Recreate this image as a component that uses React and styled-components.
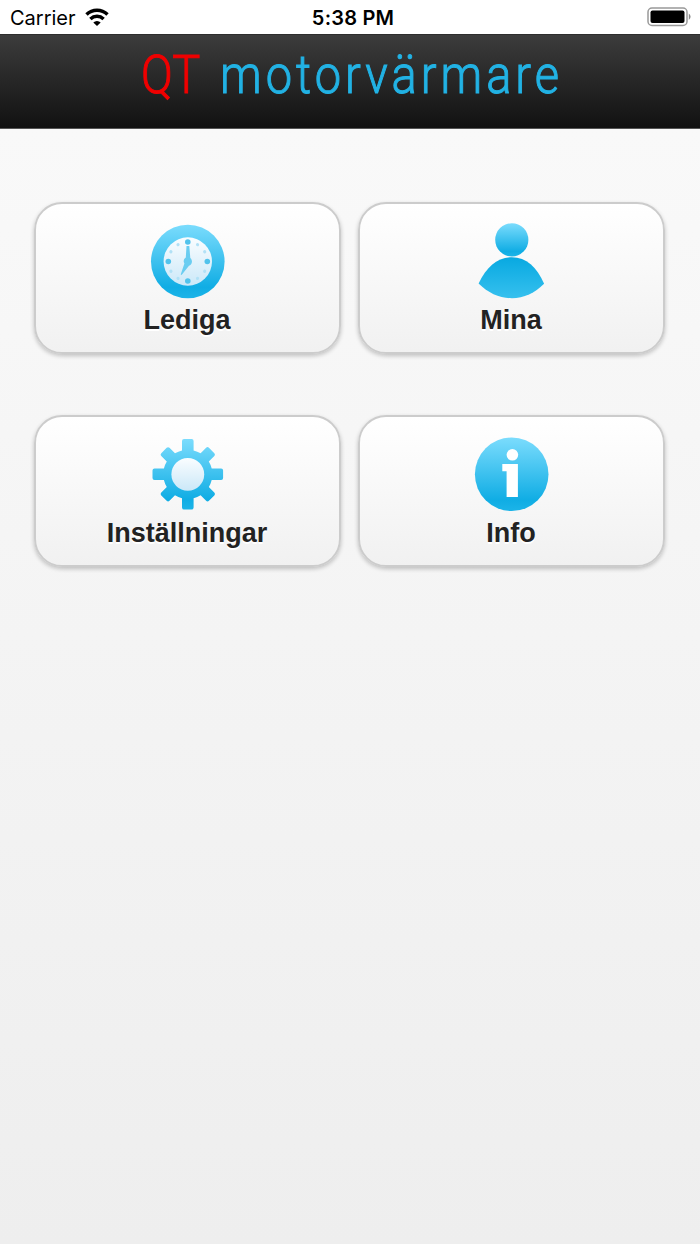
import React from 'react';
import styled, { createGlobalStyle } from 'styled-components';

const GlobalStyle = createGlobalStyle`
  * {
    box-sizing: border-box;
  }
  body {
    margin: 0;
    font-family: 'Liberation Sans', Arial, sans-serif;
  }
`;
const Page = styled.div`
  display: flex;
  flex-direction: column;
  width: 700px;
  height: 1244px;
  background: linear-gradient(#f9f9f9 128px, #eee);
`;
const StatusBar = styled.div`
  display: grid;
  grid-template-columns: 1fr auto 1fr;
  align-items: center;
  height: 34px;
  padding: 2px 8px 0 10px;
  background: #fff;
  color: #000;
  font-family: Inter, sans-serif;
  font-size: 20px;
  line-height: 32px;
`;
const Carrier = styled.div`
  display: flex;
  align-items: center;
  gap: 9px;
`;
const Time = styled.div`
  padding-left: 4px;
  font-weight: 600;
  letter-spacing: 0.2px;
`;
const Battery = styled.svg`
  justify-self: end;
  margin-top: -2px;
`;
const Wifi = styled.svg`
  margin-top: -3px;
`;
const Header = styled.header`
  display: flex;
  justify-content: center;
  height: 95px;
  border-top: 1px solid #2d2d2d;
  border-bottom: 1px solid #555;
  background: linear-gradient(#3c3c3c, #111);
`;
const Title = styled.h1`
  display: flex;
  margin: 0;
  padding-top: 8px;
  font-family: Roboto, sans-serif;
  font-size: 54px;
  font-weight: 300;
  line-height: 64px;
`;
const Word = styled.span`
  width: ${props => props.$width};
  color: ${props => props.$color};
  letter-spacing: ${props => props.$spacing};
  white-space: nowrap;
  transform: scaleX(0.87);
  transform-origin: left;
  -webkit-text-stroke: 1px ${props => props.$color};
`;
const Menu = styled.main`
  display: grid;
  grid-template-columns: 307px 307px;
  grid-auto-rows: 152px;
  gap: 61px 17px;
  padding: 73px 34px 0;
`;
const MenuButton = styled.button`
  display: flex;
  flex-direction: column;
  align-items: center;
  padding: 18px 0 0;
  border: 2px solid #ccc;
  border-radius: 28px;
  background: linear-gradient(#fff, #f1f1f1);
  box-shadow: 0 2px 4px rgba(0, 0, 0, 0.22);
`;
const Label = styled.span`
  margin-top: 2px;
  padding-right: 1px;
  color: #222;
  font-family: 'Liberation Sans', Arial, sans-serif;
  font-size: 27px;
  font-weight: 700;
  line-height: 36px;
  text-shadow: 0 2px 0 #fff;
`;

const Gradients = () => (
  <svg width="0" height="0" style={{ position: 'absolute' }}>
    <defs>
      <linearGradient id="blue" x1="0" y1="0" x2="0" y2="1">
        <stop offset="0" stopColor="#7bdcfd" />
        <stop offset="0.85" stopColor="#10ade4" />
        <stop offset="1" stopColor="#1cb4e8" />
      </linearGradient>
      <linearGradient id="body" x1="0" y1="0" x2="0" y2="1">
        <stop offset="0" stopColor="#08a9e1" />
        <stop offset="1" stopColor="#36c0ee" />
      </linearGradient>
      <linearGradient id="face" x1="0" y1="0" x2="0" y2="1">
        <stop offset="0" stopColor="#fafdff" />
        <stop offset="1" stopColor="#cbe8f8" />
      </linearGradient>
      <clipPath id="gear">
        <circle cx="38.8" cy="39.3" r="24.6" />
        {[0, 45, 90, 135].map(angle => (
          <rect
            key={angle}
            x="33"
            y={angle % 90 === 0 ? 4 : 5.6}
            width="11.6"
            height={angle % 90 === 0 ? 70.6 : 67.4}
            rx="2"
            transform={`rotate(${angle} 38.8 39.3)`}
          />
        ))}
      </clipPath>
    </defs>
  </svg>
);

const Icon = ({ children }) => (
  <svg width="78" height="78" viewBox="0 0 78 78">{children}</svg>
);

const ClockIcon = () => (
  <Icon>
    <circle cx="38.8" cy="39.5" r="36.8" fill="url(#blue)" />
    <circle cx="38.8" cy="39.5" r="24.2" fill="url(#face)" />
    {[0, 30, 60, 90, 120, 150, 180, 210, 240, 270, 300, 330].map(angle => (
      <circle
        key={angle}
        cx="38.8"
        cy="20"
        r={angle % 90 === 0 ? 2.8 : 1.6}
        fill={angle % 90 === 0 ? '#52c3ec' : '#b2e1f6'}
        transform={`rotate(${angle} 38.8 39.5)`}
      />
    ))}
    <path d="M37.5 24h2.8l1 12a4.6 4.6 0 0 1-1.3 7.8L32.6 53l-.9-.6 3.7-10.8a4.6 4.6 0 0 1 1.4-6z" fill="#6acdf1" />
  </Icon>
);

const PersonIcon = () => (
  <Icon>
    <circle cx="38.8" cy="17.8" r="16.6" fill="url(#blue)" />
    <path d="M5.6 61.5C13.6 45 24.1 35.3 38.8 35.3S63.6 45 71.1 61.8C61.6 71.2 51.1 76.2 38.8 76.2S15.6 71.3 5.6 61.5z" fill="url(#body)" />
  </Icon>
);

const GearIcon = () => (
  <Icon>
    <rect x="3" y="4" width="72" height="71" fill="url(#blue)" clipPath="url(#gear)" />
    <circle cx="38.8" cy="39.3" r="16.4" fill="url(#face)" />
  </Icon>
);

const InfoIcon = () => (
  <Icon>
    <circle cx="38.7" cy="39.3" r="36.8" fill="url(#blue)" />
    <circle cx="39.4" cy="19.8" r="5.8" fill="#fff" />
    <path d="M29.3 29h15.6v33.1H33.6V36.2h-4.3z" fill="#fff" />
  </Icon>
);

const App = () => (
  <Page>
    <GlobalStyle />
    <Gradients />
    <StatusBar>
      <Carrier>
        Carrier
        <Wifi width="24" height="18" viewBox="0 0 24 18">
          <g fill="none" stroke="#000" strokeWidth="3.5">
            <path d="M1.5 6.5a15.2 15.2 0 0 1 21 0" />
            <path d="M5.4 11a9.6 9.6 0 0 1 13.2 0" />
          </g>
          <path d="M8.3 14.4a5.3 5.3 0 0 1 7.4 0L12 18z" />
        </Wifi>
      </Carrier>
      <Time>5:38 PM</Time>
      <Battery width="45" height="20" viewBox="0 0 45 20">
        <rect x="1" y="1" width="39" height="17.5" rx="4" fill="none" stroke="#999" strokeWidth="1.5" />
        <rect x="3.5" y="3.5" width="34" height="12.5" rx="2" />
        <path d="M41.8 6.6q3.6 3.2 0 6.4z" fill="#888" />
      </Battery>
    </StatusBar>
    <Header>
      <Title>
        <Word $color="#f00000" $spacing="0.4px" $width="78.5px">QT</Word>
        <Word $color="#22b2e4" $spacing="4.6px" $width="339px">motorvärmare</Word>
      </Title>
    </Header>
    <Menu>
      <MenuButton>
        <ClockIcon />
        <Label>Lediga</Label>
      </MenuButton>
      <MenuButton>
        <PersonIcon />
        <Label>Mina</Label>
      </MenuButton>
      <MenuButton>
        <GearIcon />
        <Label>Inställningar</Label>
      </MenuButton>
      <MenuButton>
        <InfoIcon />
        <Label>Info</Label>
      </MenuButton>
    </Menu>
  </Page>
);

export default App;
